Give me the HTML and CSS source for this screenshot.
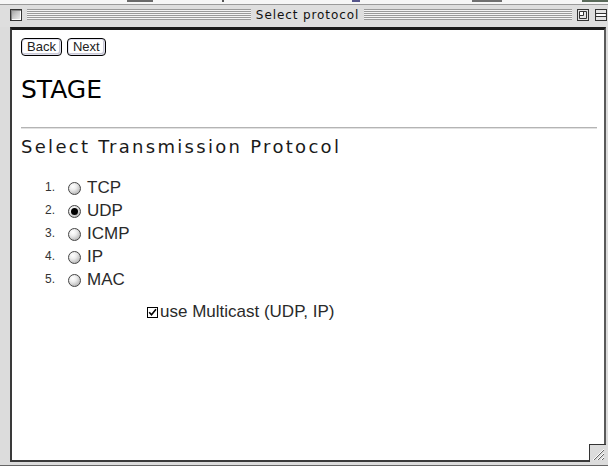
FILE: index.html
```html
<!DOCTYPE html>
<html lang="en">
<head>
<meta charset="utf-8">
<title>Select protocol</title>
<link rel="stylesheet" href="styles.css">
</head>
<body>
<div class="desktop"></div>
<div class="window">
  <div class="titlebar">
    <span class="wbox close"></span>
    <span class="stripes stripes-left"></span>
    <span class="title">Select protocol</span>
    <span class="stripes stripes-right"></span>
    <span class="wbox zoom">
      <svg width="12" height="12" viewBox="0 0 12 12">
        <rect x="0.5" y="0.5" width="11" height="11" fill="#e4e4e4" stroke="#333"/>
        <path d="M2.5 2.5h7v7h-7z" fill="none" stroke="#333"/>
        <path d="M2.5 6.5h4v-4" fill="none" stroke="#333"/>
        <path d="M3 3h3v3h-3z" fill="#fff"/>
      </svg>
    </span>
    <span class="wbox collapse">
      <svg width="12" height="12" viewBox="0 0 12 12">
        <rect x="0.5" y="0.5" width="11" height="11" fill="#e4e4e4" stroke="#333"/>
        <path d="M1 4.5h10M1 7.5h10" stroke="#333"/>
        <path d="M2 5.5h8M2 6.5h8" stroke="#fff"/>
      </svg>
    </span>
  </div>
  <div class="frame">
    <div class="content">
      <div class="nav">
        <button class="btn" type="button">Back</button>
        <button class="btn" type="button">Next</button>
      </div>
      <h1 class="stage">STAGE</h1>
      <hr class="rule">
      <h2 class="prompt">Select Transmission Protocol</h2>
      <ol class="choices">
        <li class="choice"><span class="num">1.</span><span class="radio"></span><span class="label">TCP</span></li>
        <li class="choice"><span class="num">2.</span><span class="radio checked"></span><span class="label">UDP</span></li>
        <li class="choice"><span class="num">3.</span><span class="radio"></span><span class="label">ICMP</span></li>
        <li class="choice"><span class="num">4.</span><span class="radio"></span><span class="label">IP</span></li>
        <li class="choice"><span class="num">5.</span><span class="radio"></span><span class="label">MAC</span></li>
      </ol>
      <div class="option">
        <svg class="checkbox" width="11" height="11" viewBox="0 0 11 11">
          <rect x="0.5" y="0.5" width="10" height="10" fill="#fff" stroke="#000"/>
          <path d="M2.2 5.2 L4.5 7.8 L9 2.2" fill="none" stroke="#000" stroke-width="1.6"/>
        </svg>
        <span class="label">use Multicast (UDP, IP)</span>
      </div>
    </div>
    <span class="grow">
      <svg width="16" height="17" viewBox="0 0 16 17">
        <path d="M3 15 L14 4 M7 15 L14 8 M11 15 L14 12" stroke="#fff" stroke-width="1"/>
        <path d="M4 15 L14 5 M8 15 L14 9 M12 15 L14 13" stroke="#666" stroke-width="1"/>
      </svg>
    </span>
  </div>
</div>
</body>
</html>
```

FILE: styles.css
```css
* {
  box-sizing: border-box;
}

html,
body {
  margin: 0;
  padding: 0;
}

body {
  width: 608px;
  height: 466px;
  overflow: hidden;
  background: #f6f6f6;
  font-family: "Liberation Sans", Arial, sans-serif;
  color: #000;
}

/* strip of desktop showing above the window */
.desktop {
  height: 4px;
  background-color: #f6f6f6;
  background-image: linear-gradient(to right,
    transparent 127px, #6a6a6a 127px, #6a6a6a 153px, transparent 153px,
    transparent 222px, #555 222px, #555 224px, transparent 224px,
    transparent 352px, #55558a 352px, #55558a 360px, transparent 360px,
    transparent 472px, #707070 472px, #707070 502px, transparent 502px,
    transparent 582px, #5a6a5a 582px, #5a6a5a 608px);
  background-size: 100% 2px;
  background-repeat: no-repeat;
}

.window {
  height: 462px;
  display: flex;
  flex-direction: column;
  background: #dcdcdc;
  border-top: 1px solid #9a9a9a;
  border-bottom: 1px solid #666;
}

/* Platinum title bar */
.titlebar {
  height: 22px;
  flex: none;
  display: flex;
  align-items: center;
  padding: 0 1px 3px 10px;
  background: #dedede;
}

.wbox {
  width: 12px;
  height: 12px;
  flex: none;
  display: block;
}

.wbox svg {
  display: block;
}

.close {
  border: 1px solid #333;
  background: linear-gradient(135deg, #9c9c9c 0%, #c8c8c8 45%, #f2f2f2 100%);
  box-shadow: inset 1px 1px 0 #888, inset -1px -1px 0 #fff;
  margin-right: 5px;
}

.stripes {
  height: 11px;
  background: repeating-linear-gradient(to bottom, #9a9a9a 0, #9a9a9a 1px, #f4f4f4 1px, #f4f4f4 2px);
}

.stripes-left {
  flex: 1 0 16px;
}

.stripes-right {
  flex: 1 0 0;
  margin-right: 5px;
}

.title {
  flex: none;
  padding: 0 5px;
  font-family: "DejaVu Sans", sans-serif;
  font-size: 12px;
  letter-spacing: 0.9px;
  line-height: 14px;
  color: #111;
}

.zoom {
  margin-right: 6px;
}

/* content region of the window */
.frame {
  flex: 1;
  position: relative;
  margin: 0 2px 3px 10px;
  background: #fff;
  border-top: 3px solid #1c1c1c;
  border-left: 2px solid #3a3a3a;
  border-right: 2px solid #5a5a5a;
  border-bottom: 2px solid #3a3a3a;
}

.content {
  padding: 8px 7px 0 9px;
}

.nav {
  display: flex;
  gap: 5px;
  height: 18px;
}

.btn {
  height: 18px;
  margin: 0;
  padding: 0 5px;
  border: 1px solid #000;
  border-radius: 4px;
  background: #fff;
  box-shadow: inset 0 0 0 1px #e0e0ee, inset -1px -1px 0 1px #c8c8d4;
  font-family: "Liberation Sans", Arial, sans-serif;
  font-size: 13px;
  line-height: 16px;
  color: #222;
}

.stage {
  margin: 19px 0 0;
  font-family: "DejaVu Sans", sans-serif;
  font-size: 25px;
  font-weight: normal;
  line-height: 30px;
  color: #000;
}

.rule {
  margin: 22px 0 0;
  height: 2px;
  border: 0;
  background: linear-gradient(to bottom, #b4b4b4 0, #b4b4b4 1px, #e2e2e2 1px);
}

.prompt {
  margin: 7px 0 0;
  font-family: "DejaVu Sans", sans-serif;
  font-size: 18px;
  font-weight: normal;
  letter-spacing: 2.3px;
  line-height: 22px;
  color: #1a1a1a;
}

.choices {
  list-style: none;
  margin: 18px 0 0;
  padding: 0 0 0 24px;
}

.choice {
  display: flex;
  height: 23px;
  line-height: 23px;
}

.num {
  width: 23px;
  flex: none;
  font-size: 12px;
  color: #333;
}

.radio {
  width: 13px;
  height: 13px;
  flex: none;
  align-self: center;
  margin: 2px 6px 0 0;
  border-radius: 50%;
  border: 1px solid #444;
  background: radial-gradient(circle at 35% 30%, #ffffff 0, #ececec 35%, #bcbcbc 75%, #929292 100%);
  position: relative;
}

.radio.checked::after {
  content: "";
  position: absolute;
  left: 2px;
  top: 2px;
  width: 7px;
  height: 7px;
  border-radius: 50%;
  background: #000;
}

.label {
  font-size: 17px;
  color: #2a2a2a;
}

.option {
  display: flex;
  align-items: center;
  height: 23px;
  line-height: 23px;
  margin: 9px 0 0 126px;
}

.checkbox {
  flex: none;
  margin: 1px 2px 0 0;
  display: block;
}

/* size box in the lower-right corner */
.grow {
  position: absolute;
  right: -2px;
  bottom: -2px;
  width: 17px;
  height: 18px;
  background: #dcdcdc;
  border-left: 1px solid #333;
  border-top: 1px solid #333;
}

.grow svg {
  display: block;
}
```
